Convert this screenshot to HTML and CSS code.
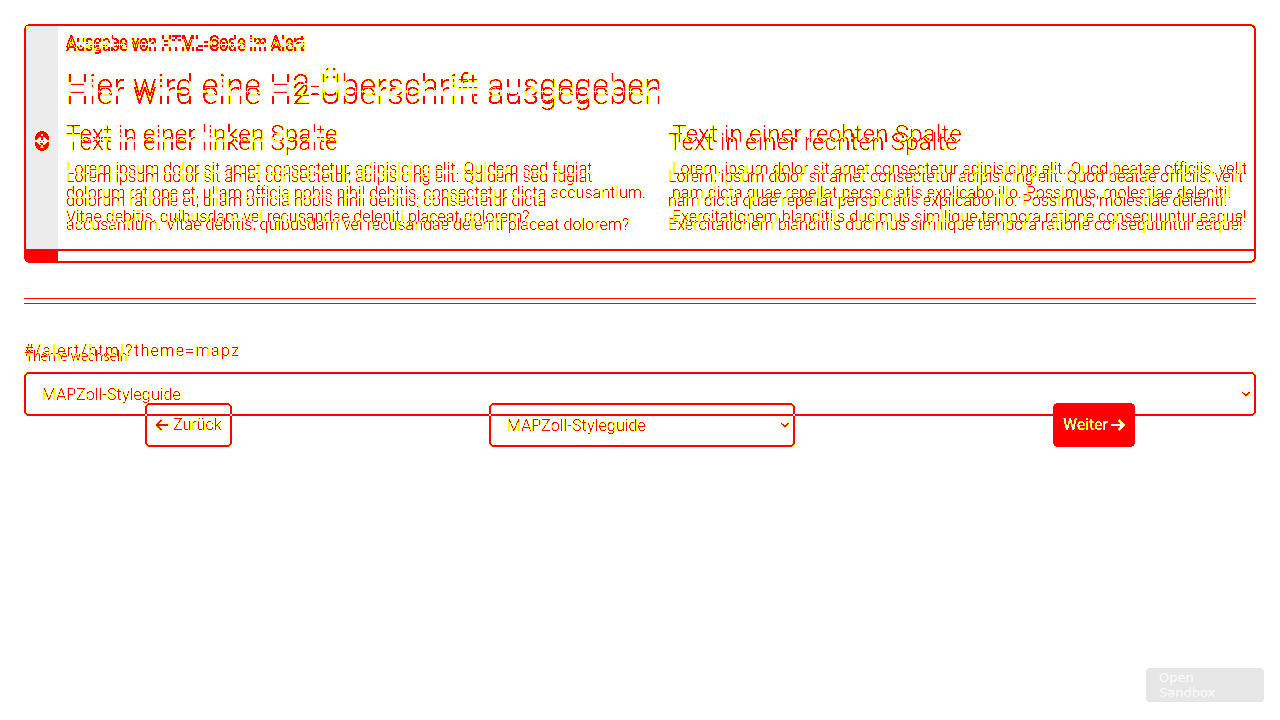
FILE: index.html
```html
<!DOCTYPE html>
<html lang="de">
<head>
<meta charset="utf-8">
<title>Alert</title>
<link rel="stylesheet" href="styles.css">
</head>
<body>
<svg class="defs" width="0" height="0" aria-hidden="true">
  <!-- red/green channels hold the two renderings; differing pixels turn red, soft edges yellow, shared ones grey -->
  <filter id="diff" x="0" y="0" width="100%" height="100%" color-interpolation-filters="sRGB">
    <feColorMatrix in="SourceGraphic" result="a" values="1 0 0 0 0  1 0 0 0 0  1 0 0 0 0  0 0 0 0 1"/>
    <feColorMatrix in="SourceGraphic" result="b" values="0 1 0 0 0  0 1 0 0 0  0 1 0 0 0  0 0 0 0 1"/>
    <feBlend in="a" in2="b" mode="difference"/>
    <feColorMatrix values="0 0 0 0 1  1 0 0 0 0  0 0 0 0 0  1 0 0 0 0"/>
    <feComponentTransfer result="marks">
      <feFuncG type="discrete" tableValues="1 1 1 1 1 1 0 0 0 0"/>
      <feFuncA type="discrete" tableValues="0 1 1 1 1 1 1 1 1 1"/>
    </feComponentTransfer>
    <feComposite in="a" in2="b" operator="arithmetic" k1="1" k2="0" k3="0" k4="0"/>
    <feColorMatrix result="same" values="0 0 0 0 .925  0 0 0 0 .925  0 0 0 0 .925  1 0 0 0 0"/>
    <feMerge><feMergeNode in="same"/><feMergeNode in="marks"/></feMerge>
  </filter>
  <symbol id="chevron" viewBox="0 0 10 8"><path d="M1.2 2 5 5.7 8.8 2" fill="none" stroke="currentColor" stroke-width="1.1"/></symbol>
</svg>
<div class="stage">
  <div class="layer first">
    <section class="card">
      <div class="bar"><svg class="info" viewBox="0 0 14 14"><circle cx="7" cy="7" r="7"/><path d="M6 3h2v2H6zM5.3 6H8v4h.8v1H5.2v-1H6V7h-.7z" fill="currentColor"/></svg></div>
      <div class="body">
        <div class="title">Ausgabe von HTML-Code im Alert</div>
        <h2>Hier wird eine H2-Überschrift ausgegeben</h2>
        <div class="cols">
          <div><h3>Text in einer linken Spalte</h3><p>Lorem ipsum dolor sit amet consectetur, adipisicing elit. Quidem sed fugiat<br>dolorum ratione et, ullam officia nobis nihil debitis, consectetur dicta accusantium.<br>Vitae debitis, quibusdam vel recusandae deleniti placeat dolorem?</p></div>
          <div><h3>Text in einer rechten Spalte</h3><p>Lorem, ipsum dolor sit amet consectetur adipisicing elit. Quod beatae officiis, velit<br>nam dicta quae repellat perspiciatis explicabo illo. Possimus, molestiae deleniti!<br>Exercitationem blanditiis ducimus similique tempora ratione consequuntur eaque!</p></div>
        </div>
      </div>
    </section>
    <hr>
    <label class="label">Theme wechseln</label>
    <div class="select"><span>MAPZoll-Styleguide</span><svg class="chev"><use href="#chevron"/></svg></div>
  </div>
  <div class="layer second">
    <section class="card">
      <div class="bar"><svg class="info" viewBox="0 0 14 14"><circle cx="7" cy="7" r="7"/><path d="M6 3h2v2H6zM5.3 6H8v4h.8v1H5.2v-1H6V7h-.7z" fill="currentColor"/></svg></div>
      <div class="body">
        <div class="title">Ausgabe von HTML-Code im Alert</div>
        <h2>Hier wird eine H2-Überschrift ausgegeben</h2>
        <div class="cols">
          <div><h3>Text in einer linken Spalte</h3><p>Lorem ipsum dolor sit amet consectetur, adipisicing elit. Quidem sed fugiat<br>dolorum ratione et, ullam officia nobis nihil debitis, consectetur dicta<br>accusantium. Vitae debitis, quibusdam vel recusandae deleniti placeat dolorem?</p></div>
          <div><h3>Text in einer rechten Spalte</h3><p>Lorem, ipsum dolor sit amet consectetur adipisicing elit. Quod beatae officiis, velit<br>nam dicta quae repellat perspiciatis explicabo illo. Possimus, molestiae deleniti!<br>Exercitationem blanditiis ducimus similique tempora ratione consequuntur eaque!</p></div>
        </div>
      </div>
    </section>
    <hr>
    <div class="route">#/alert/html?theme=mapz</div>
    <div class="nav">
      <div class="btn"><svg class="arrow" viewBox="0 0 14 12"><path d="M13.5 6H1.5M6.5 1 1.5 6l5 5"/></svg><span>Zurück</span></div>
      <div class="select"><span>MAPZoll-Styleguide</span><svg class="chev"><use href="#chevron"/></svg></div>
    </div>
  </div>
</div>
<div class="next"><span>Weiter</span><svg class="arrow" viewBox="0 0 14 12"><path d="M0 6h12.5M7.5 1l5 5-5 5"/></svg></div>
<div class="sandbox"><span>Open<br>Sandbox</span></div>
</body>
</html>
```
FILE: styles.css
```css
* { box-sizing: border-box; }
body { margin: 0; width: 1280px; height: 720px; overflow: hidden; position: relative; background: #fff; font: 300 16px/24px Roboto, sans-serif; letter-spacing: 0; }
.defs { position: absolute; }
.stage { position: relative; width: 1280px; height: 720px; background: #000; isolation: isolate; filter: url(#diff); }
.layer { position: absolute; inset: 0; padding: 24px; }
.first { color: #f00; }
.second { color: #0f0; mix-blend-mode: screen; background: #000; }
.card { display: flex; border: 2px solid transparent; border-radius: 6px; }
.first .card { height: 227px; border-bottom: 0; }
.second .card { height: 239px; border-color: #0f0; overflow: hidden; }
.bar { flex: none; width: 32px; background: currentColor; display: flex; align-items: center; justify-content: center; }
.first .bar { height: 223px; }
.info { width: 14px; height: 14px; fill: #000; }
.body { flex: 1; min-width: 0; padding: 6px 0 0 8px; }
.first .body { border-bottom: 2px solid #f00; }
.second .body { padding-top: 10px; }
.title { font-size: 16px; line-height: 20px; font-weight: 600; letter-spacing: -.2px; }
h2, h3, p { margin: 0; font-weight: 300; white-space: nowrap; }
h2 { font-size: 32px; line-height: 38px; margin-top: 14px; letter-spacing: .35px; }
.second h2 { margin-top: 18px; }
h3 { font-size: 24px; line-height: 29px; margin: 16px 0 8px; letter-spacing: .23px; }
p { letter-spacing: .07px; }
.cols { display: grid; grid-template-columns: 606px 1fr; }
.second .cols { grid-template-columns: 602px 1fr; }
hr { height: 1px; border: 0; background: currentColor; color: inherit; margin: 47px 0 0; }
.second hr { margin-top: 40px; }
.label { display: block; font-size: 14px; line-height: 20px; margin-top: 47px; padding-left: 1px; letter-spacing: -.13px; }
.select { display: flex; align-items: center; justify-content: space-between; height: 44px; border: 2px solid currentColor; border-radius: 5px; padding: 0 3px 0 16px; letter-spacing: .15px; }
.first .select { margin-top: 6px; }
.select span { padding-top: 1px; }
.chev { width: 10px; height: 8px; }
.route { margin-top: 35px; letter-spacing: 1.35px; }
.nav { display: flex; margin: 40px 0 0 121px; }
.btn { width: 87px; height: 44px; border: 2px solid currentColor; border-radius: 5px; display: flex; align-items: center; gap: 4px; padding-left: 8px; }
.nav .select { width: 306px; margin-left: 257px; }
.arrow { width: 14px; height: 12px; fill: none; stroke: currentColor; stroke-width: 1.5; }
.next { position: absolute; left: 1053px; top: 403px; width: 82px; height: 44px; border-radius: 6px; background: #f00; color: #000; display: flex; align-items: center; padding-left: 10px; gap: 3px; font-weight: 500; letter-spacing: -.2px; filter: url(#diff); }
.next .arrow { stroke-width: 2.5; }
.sandbox { position: absolute; left: 1146px; top: 668px; width: 118px; height: 34px; border-radius: 4px; background: #e6e6e6; color: #fafafa; font: 400 13px/15px "DejaVu Sans", sans-serif; padding: 2px 13px 0; }
```
